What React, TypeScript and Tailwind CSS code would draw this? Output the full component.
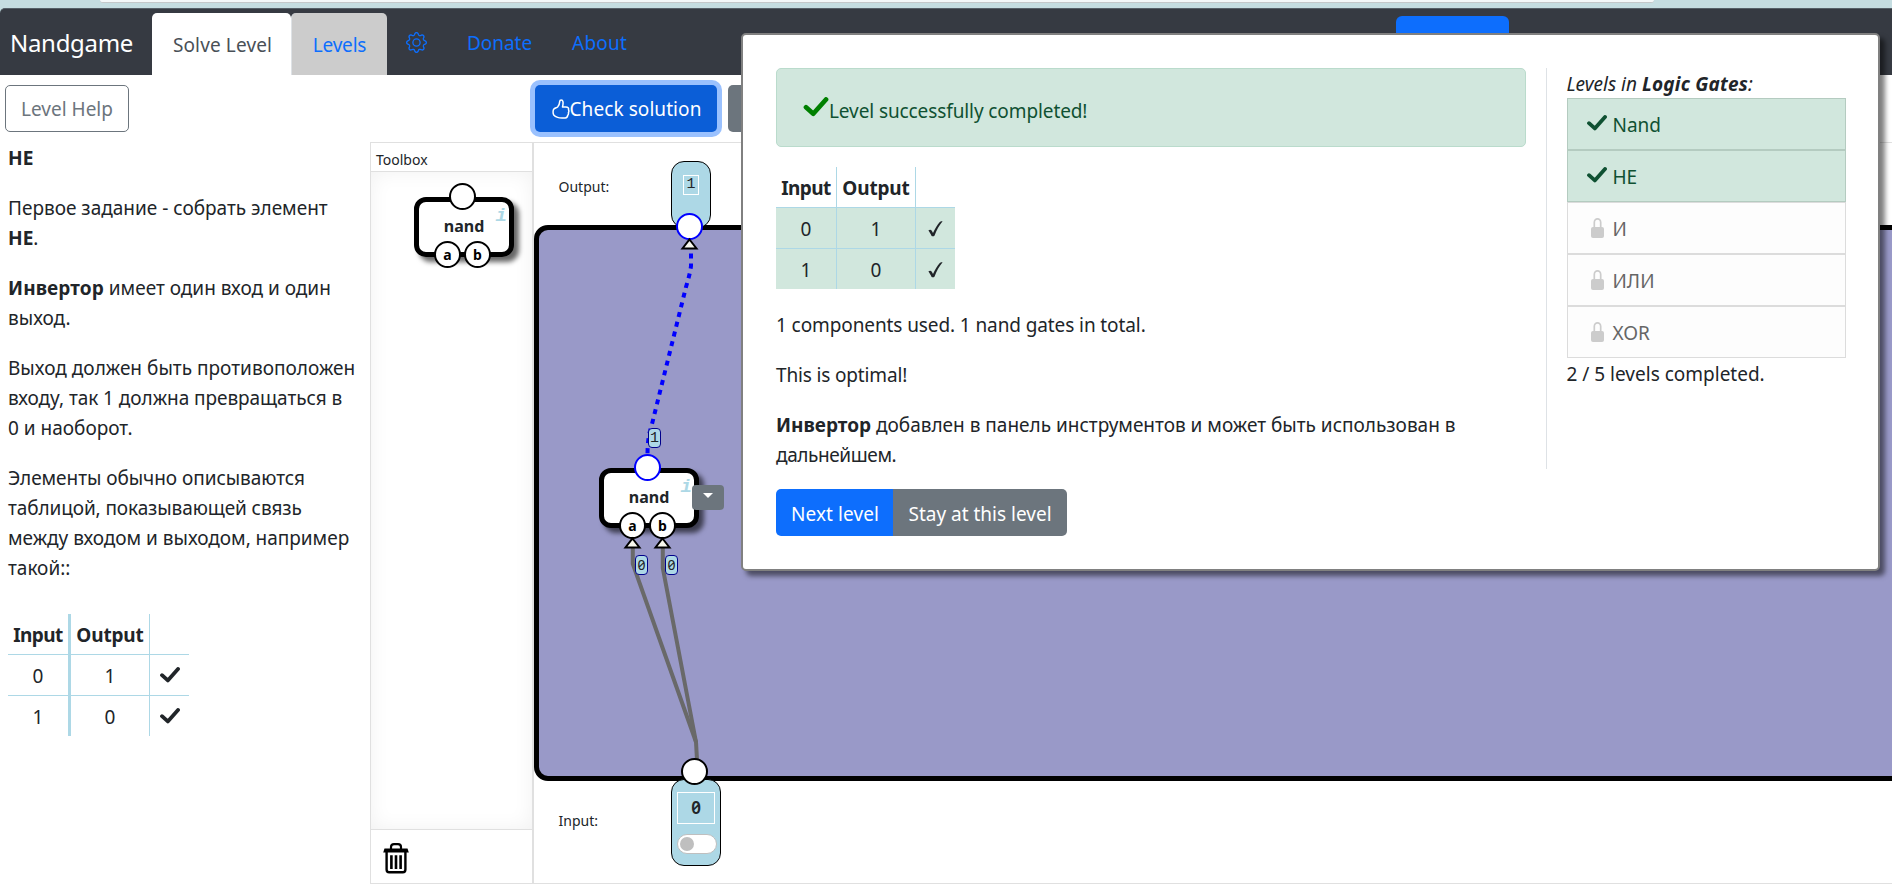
import type { ReactNode } from "react";
import { BsGear } from "react-icons/bs";

function Check({ className }: { className: string }) {
  return (
    <svg viewBox="0 0 20 16" className={className} fill="none" stroke="currentColor" strokeWidth="3.8">
      <path d="M2 8.2 L7.8 13.4 L18 2" strokeLinecap="round" strokeLinejoin="round" />
    </svg>
  );
}

function SlimCheck() {
  return (
    <svg viewBox="0 0 15 16" className="h-4 w-[15px]" fill="currentColor">
      <path d="M0.4 9.6 C1.2 8.6 2.8 8.4 3.6 9.4 C4.2 10.2 4.6 11.2 5 12 C6.8 8 9.4 3.6 11.8 0.9 C12.6 0.3 13.6 0.2 14.6 0.2 C11.2 4.2 8.6 9 6.6 14.4 C6 15.4 4.4 15.6 3.6 15 C2.8 13.4 1.6 11 0.4 9.6 Z" />
    </svg>
  );
}

function ThumbUp() {
  return (
    <svg viewBox="0 0 18 20" className="ml-px h-5 w-[18px]" fill="none" stroke="currentColor" strokeWidth="1.5" strokeLinejoin="round">
      <path d="M1.600 10.300 C2.600 8.800 4.600 8.800 5.600 8 C7 6.600 7.600 4.600 7.700 2.600 C7.800 0.600 10.600 0.400 11 2.800 C11.200 4.600 10.900 6.400 10.500 8 H14 C16 8 16.900 9.200 16.500 10.600 C17 11.800 17 12.800 16.400 13.600 C16.700 14.800 16.400 15.800 15.700 16.400 C15.600 18 14.800 18.800 13.200 18.900 C10 19.200 7.400 19.100 5.600 18.400 C4 17.800 2.800 17.200 1.700 16 C0.900 14 0.800 12.200 1.600 10.300 Z" />
    </svg>
  );
}

function Lock() {
  return (
    <svg viewBox="0 0 13 20" className="h-5 w-[13px] shrink-0 text-[#ccc]">
      <path d="M3.300 10 V4.400 A3.200 3.500 0 0 1 9.700 4.400 V10" fill="none" stroke="currentColor" strokeWidth="1.7" />
      <rect x="0" y="9" width="13" height="11" rx="2" fill="currentColor" />
    </svg>
  );
}

function Trash() {
  return (
    <svg viewBox="0 0 26 31" className="h-[31px] w-[26px]" fill="none" stroke="black">
      <path d="M8 6 V4 Q8 1.2 11 1.2 H15 Q18 1.2 18 4 V6" strokeWidth="2.2" />
      <path d="M1.5 5.5 H24.5 L25.8 9.4 H0.2 Z" fill="black" stroke="none" />
      <path d="M3.6 9 V26.5 Q3.6 29.2 6.2 29.2 H19.8 Q22.4 29.2 22.4 26.5 V9" strokeWidth="2.4" />
      <path d="M8.4 12.2 V26 M13 12.2 V26 M17.6 12.2 V26" strokeWidth="2.6" />
    </svg>
  );
}

type TableProps = { done?: boolean };

function TruthTable({ done = false }: TableProps) {
  const rows = [
    ["0", "1"],
    ["1", "0"],
  ];
  const firstLine = done ? "border-r border-[#add8e6]" : "border-r-[3px] border-[#add8e6]";
  const firstWidth = done ? "w-[61px]" : "w-[63px]";
  return (
    <div className={done ? "w-[179px]" : "w-[181px]"}>
      <div className="flex h-10 font-bold">
        <div className={`flex items-center justify-center pt-px tracking-[-0.6px] ${firstWidth} ${firstLine}`}>Input</div>
        <div className="flex w-[79px] items-center justify-center border-r border-[#add8e6] pt-px tracking-[-0.15px]">Output</div>
      </div>
      {rows.map((row) => (
        <div key={row[0]} className={`flex h-[41px] border-t border-[#add8e6] ${done ? "bg-[#d1e7dd]" : ""}`}>
          <div className={`flex items-center justify-center pt-0.5 ${firstWidth} ${firstLine}`}>{row[0]}</div>
          <div className="flex w-[79px] items-center justify-center border-r border-[#add8e6] pt-0.5">{row[1]}</div>
          <div className={`flex flex-1 items-center justify-center ${done ? "pt-0.5" : ""}`}>
            {done ? <SlimCheck /> : <Check className="h-4 w-5" />}
          </div>
        </div>
      ))}
    </div>
  );
}

function Port({ label, blue = false, className }: { label?: string; blue?: boolean; className: string }) {
  return (
    <div
      className={`absolute flex h-[27px] w-[27px] items-center justify-center rounded-full border-[2.5px] bg-white text-[14px] leading-none font-bold text-black ${blue ? "border-[#0000ff]" : "border-black"} ${className}`}
    >
      {label}
    </div>
  );
}

function NandNode({ blue = false, className }: { blue?: boolean; className: string }) {
  return (
    <div
      className={`absolute h-[60px] w-[100px] rounded-[12px] border-[5px] border-black bg-white shadow-[5px_5px_5px_rgba(0,0,0,0.6)] ${className}`}
    >
      <div className="pt-[12px] text-center text-[16px] leading-[24px] font-bold">nand</div>
      <div className="absolute top-[4px] right-[2px] font-['Liberation_Mono',monospace] text-[19px] leading-[20px] font-bold text-[#add8e6] italic">i</div>
      <Port blue={blue} className="top-[-19px] left-[30px]" />
      <Port label="a" className="top-[39px] left-[15px]" />
      <Port label="b" className="top-[39px] left-[45px]" />
    </div>
  );
}

function WireLabel({ value, className }: { value: string; className: string }) {
  return (
    <div
      className={`absolute flex h-5 w-[13px] items-center justify-center rounded-[4px] border border-[#00008b] bg-[#add8e6] text-[14px] leading-none ${className}`}
    >
      {value === "1" ? <span className="font-['Liberation_Mono',monospace] text-[15px]">1</span> : <span className="slashed-zero">0</span>}
    </div>
  );
}

function LevelItem({ done = false, children }: { done?: boolean; children: ReactNode }) {
  return (
    <div
      className={`flex h-[52px] items-center border pl-[19px] ${done ? "border-[#b4cbc0] bg-[#d1e7dd] text-[#0f5132]" : "border-[#dcdcdc] bg-[#fdfdfd] text-[#666]"}`}
    >
      <div className="flex w-[26px] justify-start">
        {done ? <Check className="mt-[-3px] h-4 w-5" /> : <div className="pl-1"><Lock /></div>}
      </div>
      <span className="pt-0.5">{children}</span>
    </div>
  );
}

function CompletedDialog() {
  return (
    <div className="absolute top-[33px] left-[741px] flex h-[538px] w-[1139px] rounded-[5px] border-2 border-[#808080] bg-white p-[33px] shadow-[5px_5px_5px_rgba(0,0,0,0.5)]">
      <div className="w-[750px] shrink-0">
        <div className="flex h-[79px] items-center rounded-[5px] border border-[#badbcc] bg-[#d1e7dd] pl-[26px] text-[#0f5132]">
          <Check className="mt-[-1px] h-5 w-[26px] text-[#008000]" />
          <span className="pt-[7px] tracking-[-0.1px]">Level successfully completed!</span>
        </div>
        <div className="mt-5">
          <TruthTable done />
        </div>
        <p className="mt-[21px] tracking-[-0.1px]">1 components used. 1 nand gates in total.</p>
        <p className="mt-5 tracking-[-0.15px]">This is optimal!</p>
        <p className="mt-5">
          <b>Инвертор</b> добавлен в панель инструментов и может быть использован в<br />
          <span className="tracking-[-0.4px]">дальнейшем.</span>
        </p>
        <div className="mt-[19px] flex h-[47px] text-white">
          <button className="w-[117px] rounded-l-[5px] bg-[#0d6efd] pt-[3px] pl-px tracking-[0.1px]">Next level</button>
          <button className="w-[174px] rounded-r-[5px] bg-[#6c757d] pt-[3px]">Stay at this level</button>
        </div>
      </div>
      <div className="ml-5 h-[401px] flex-1 border-l border-[#dee2e6] pl-[19.5px]">
        <div className="h-[30px] pt-px italic">
          Levels in <b className="tracking-[0.2px]">Logic Gates</b>:
        </div>
        <div className="w-[279px]">
          <LevelItem done>Nand</LevelItem>
          <LevelItem done>НЕ</LevelItem>
          <LevelItem>И</LevelItem>
          <LevelItem>ИЛИ</LevelItem>
          <LevelItem>XOR</LevelItem>
        </div>
        <div className="pt-px">2 / 5 levels completed.</div>
      </div>
    </div>
  );
}

function Workspace() {
  return (
    <div className="relative flex-1 overflow-hidden border-y border-l border-[#e0e0e0] text-[14px]">
      <div className="absolute top-[82px] left-0 h-[556px] w-[1400px] rounded-[14px] border-[5px] border-black bg-[#9999c8]" />
      <div className="absolute top-[32px] left-[24.5px] leading-[24px]">Output:</div>
      <div className="absolute top-[666px] left-[24.5px] leading-[24px]">Input:</div>

      <div className="absolute top-[18px] left-[137px] flex h-[67px] w-10 justify-center rounded-[13px] border border-black bg-[#add8e6] pt-[13px]">
        <div className="flex h-5 w-4 items-center justify-center border border-white font-['Liberation_Mono',monospace] text-[15px]">1</div>
      </div>

      <svg viewBox="534 143 1358 740" className="absolute top-0 left-0 h-[740px] w-[1358px]" fill="none">
        <path d="M691 253.500 V266 C690 274 688 280 686 287 L652 424 C649 434 647.500 440 647.500 456" stroke="#0000ff" strokeWidth="4" strokeDasharray="5 5" />
        <path d="M632.800 548 V564 L696 742 L697 760" stroke="#696969" strokeWidth="4" />
        <path d="M662.800 548 V568 L696 742" stroke="#696969" strokeWidth="4" />
      </svg>

      <Port blue className="top-[70px] left-[142px]" />

      <div className="absolute top-[636px] left-[137px] flex h-[87px] w-[50px] flex-col items-center rounded-[13px] border border-black bg-[#add8e6] pt-3">
        <div className="flex h-8 w-[38px] items-center justify-center border border-white text-[17px] font-semibold slashed-zero">0</div>
        <div className="mt-[10px] ml-px flex h-5 w-10 items-center rounded-full border border-[#bfbfbf] bg-white pl-0.5">
          <div className="h-3.5 w-3.5 rounded-full bg-[#bfbfbf]" />
        </div>
      </div>
      <Port className="top-[615px] left-[147px]" />

      <NandNode blue className="top-[325px] left-[65px]" />
      <button className="absolute top-[342px] left-[158px] flex h-[25px] w-8 justify-center rounded-[4px] bg-[#6c757d] pt-2">
        <svg viewBox="0 0 10 5" className="h-[5px] w-[10px]">
          <path d="M0 0 H10 L5 5 Z" fill="white" />
        </svg>
      </button>

      <svg viewBox="534 143 1358 740" className="absolute top-0 left-0 h-[740px] w-[1358px]" fill="#f8f8ee" stroke="black" strokeWidth="2">
        <path d="M689.500 239.500 L696.500 248.500 H682.500 Z" />
        <path d="M632.500 538.500 L639.500 547.500 H625.500 Z" />
        <path d="M662.500 538.500 L669.500 547.500 H655.500 Z" />
      </svg>
      <WireLabel value="1" className="top-[285px] left-[114px]" />
      <WireLabel value="0" className="top-[412px] left-[101px]" />
      <WireLabel value="0" className="top-[412px] left-[131px]" />
    </div>
  );
}

export default function App() {
  return (
    <div className="relative flex h-[892px] w-full flex-col overflow-hidden bg-white font-['Noto_Sans',sans-serif] text-[19px] leading-[30px] text-[#212529]">
      <div className="h-2 shrink-0 bg-[#c5dde1] pr-[238px] pl-[100px]">
        <div className="h-[3px] rounded-b-[6px] border-b border-[#c4c8ca] bg-[#f4f8f9]" />
      </div>

      <div className="shrink-0 bg-[#c5dde1]">
        <nav className="flex h-[67px] items-end rounded-tl-[5px] border-t border-[#566068] bg-[#363a42] text-[#0d6efd]">
          <div className="w-[152px] pb-[14px] pl-[10px] text-[24px] leading-[36px] tracking-[-0.3px] text-white">Nandgame</div>
          <div className="flex h-[62px] w-[139px] items-center justify-center rounded-t-[5px] bg-white pt-0.5 pl-0.5 tracking-[0.13px] text-[#495057]">Solve Level</div>
          <div className="flex h-[62px] w-[96px] items-center justify-center rounded-t-[5px] border-l border-[#dee2e6] bg-[#ccc] pt-0.5 tracking-[-0.2px]">Levels</div>
          <div className="flex h-[62px] items-center pb-[3px]">
            <BsGear className="mt-[-1px] ml-[19px] h-[21px] w-[21px]" />
            <span className="ml-10 tracking-[-0.05px]">Donate</span>
            <span className="ml-[40px] tracking-[0.2px]">About</span>
          </div>
          <div className="flex h-[59px] flex-1 justify-end">
            <div className="mr-[383px] h-[47px] w-[113px] rounded-[6px] bg-[#0d6efd]" />
          </div>
        </nav>
      </div>

      <div className="flex h-[67px] shrink-0 pt-[10px] pl-[5px]">
        <button className="h-[47px] w-[124px] rounded-[5px] border border-[#6c757d] pt-px text-[#6c757d]">Level Help</button>
        <button className="ml-[406px] flex h-[47px] w-[182px] items-center justify-center rounded-[5px] bg-[#0b5ed7] pt-px text-white shadow-[0_0_0_5px_#9ac1fe]">
          <ThumbUp />
          <span className="tracking-[0.07px]">Check solution</span>
        </button>
        <button className="ml-[11px] h-[47px] w-[100px] rounded-[5px] bg-[#6c757d]" />
      </div>

      <div className="flex h-[742px]">
        <div className="w-[370px] shrink-0 pt-px pl-2">
          <p className="font-bold">НЕ</p>
          <p className="mt-5">
            Первое задание - собрать элемент
            <br />
            <b>НЕ</b>.
          </p>
          <p className="mt-5">
            <b className="tracking-[0.1px]">Инвертор</b> имеет один вход и один
            <br />
            выход.
          </p>
          <p className="mt-5">
            <span className="tracking-[0.02px]">Выход должен быть противоположен</span>
            <br />
            <span className="tracking-[-0.05px]">входу, так 1 должна превращаться в</span>
            <br />0 и наоборот.
          </p>
          <p className="mt-5">
            <span className="tracking-[-0.05px]">Элементы обычно описываются</span>
            <br />
            <span className="tracking-[-0.1px]">таблицой, показывающей связь</span>
            <br />
            <span className="tracking-[-0.02px]">между входом и выходом, например</span>
            <br />
            такой::
          </p>
          <div className="mt-[31px]">
            <TruthTable />
          </div>
        </div>

        <div className="flex w-[163px] shrink-0 flex-col border border-[#e0e0e0]">
          <div className="h-[29px] border-b border-[#e0e0e0] pt-[3px] pl-[5px] text-[14px] leading-[28px]">Toolbox</div>
          <div className="relative flex-1 shadow-[inset_0_0_20px_rgba(0,0,0,0.06)]">
            <NandNode className="top-[25px] left-[43px]" />
          </div>
          <div className="h-[54px] border-t border-[#e0e0e0] pt-[13px] pl-3">
            <Trash />
          </div>
        </div>

        <Workspace />
      </div>

      <CompletedDialog />
    </div>
  );
}
